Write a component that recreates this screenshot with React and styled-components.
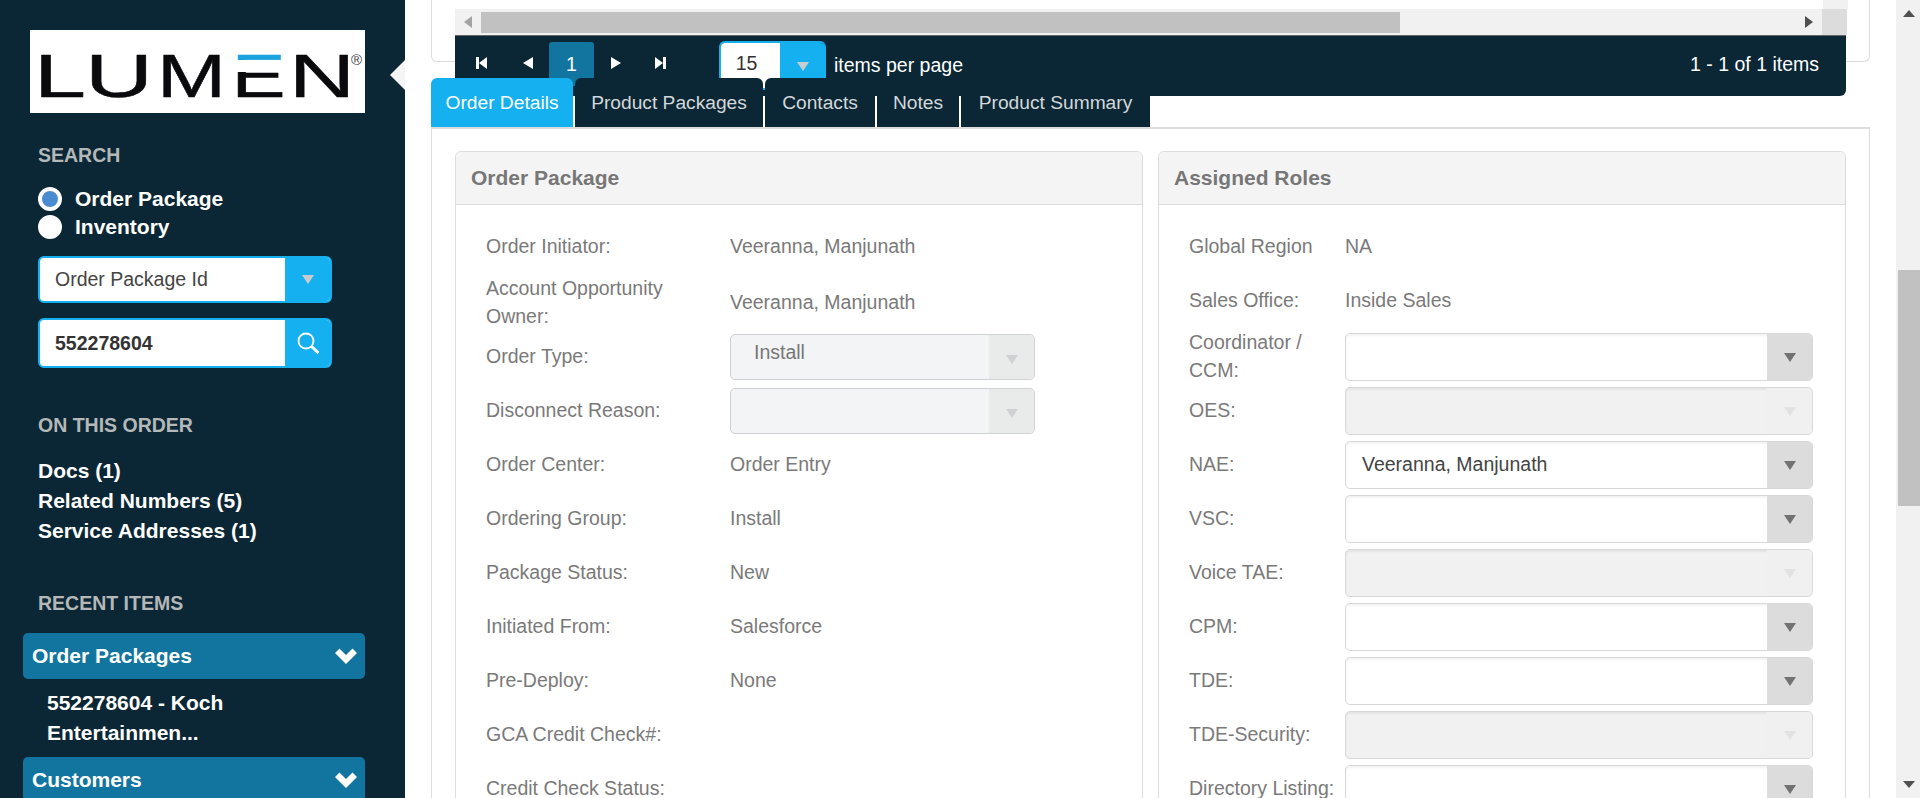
import React from 'react';
import styled, { createGlobalStyle } from 'styled-components';

const navy = '#0b2735';
const sky = '#14b0ef';
const teal = '#12759f';

const GlobalStyle = createGlobalStyle`
	html, body {
		margin: 0;
		height: 100%;
		overflow: hidden;
		background: #fff;
		font-family: "Liberation Sans", Arial, sans-serif;
	}
`;

const orderRows = [
	{ label: 'Order Initiator:', value: 'Veeranna, Manjunath' },
	{ label: 'Account Opportunity Owner:', value: 'Veeranna, Manjunath', tall: true },
	{ label: 'Order Type:', select: 'Install' },
	{ label: 'Disconnect Reason:', select: '' },
	{ label: 'Order Center:', value: 'Order Entry' },
	{ label: 'Ordering Group:', value: 'Install' },
	{ label: 'Package Status:', value: 'New' },
	{ label: 'Initiated From:', value: 'Salesforce' },
	{ label: 'Pre-Deploy:', value: 'None' },
	{ label: 'GCA Credit Check#:', value: '' },
	{ label: 'Credit Check Status:', value: '' },
];

const roleRows = [
	{ label: 'Global Region', value: 'NA' },
	{ label: 'Sales Office:', value: 'Inside Sales' },
	{ label: 'Coordinator / CCM:', role: '', tall: true },
	{ label: 'OES:', role: '', off: true },
	{ label: 'NAE:', role: 'Veeranna, Manjunath' },
	{ label: 'VSC:', role: '' },
	{ label: 'Voice TAE:', role: '', off: true },
	{ label: 'CPM:', role: '' },
	{ label: 'TDE:', role: '' },
	{ label: 'TDE-Security:', role: '', off: true },
	{ label: 'Directory Listing:', role: '' },
];

const Logo = () => (
	<LogoBox>
		<svg width="335" height="83" viewBox="0 0 335 83">
			<defs>
				<linearGradient id="lumenE" x1="0" y1="23" x2="0" y2="67" gradientUnits="userSpaceOnUse">
					<stop offset="0.16" stopColor="#1aa3de" />
					<stop offset="0.16" stopColor="#fff" />
					<stop offset="0.44" stopColor="#fff" />
					<stop offset="0.44" stopColor="#0a0a0c" />
				</linearGradient>
			</defs>
			<g fontFamily="Liberation Sans" fontSize="61" fill="#0a0a0c" stroke="#0a0a0c" strokeWidth="0.5" strokeLinejoin="round">
				<text x="4" y="66.5" textLength="52" lengthAdjust="spacingAndGlyphs">L</text>
				<text x="55" y="66.5" textLength="68" lengthAdjust="spacingAndGlyphs">U</text>
				<text x="127" y="66.5" textLength="69" lengthAdjust="spacingAndGlyphs">M</text>
				<text x="201.5" y="66.5" textLength="54" lengthAdjust="spacingAndGlyphs" fill="url(#lumenE)" stroke="url(#lumenE)">E</text>
				<text x="259" y="66.5" textLength="66" lengthAdjust="spacingAndGlyphs">N</text>
			</g>
			<text x="321" y="35" fontFamily="Liberation Sans" fontSize="15" fill="#444">®</text>
		</svg>
	</LogoBox>
);

const Caret = ({ color }) => (
	<svg width="12" height="9" viewBox="0 0 12 9">
		<path d="M0 0h12L6 9z" fill={color} />
	</svg>
);

const Chevron = () => (
	<svg width="22" height="16" viewBox="0 0 22 16">
		<path d="M0 5L4.5.5 11 7 17.5.5 22 5 11 16z" fill="#fff" />
	</svg>
);

const PagerIcon = ({ d }) => (
	<svg width="14" height="16" viewBox="0 0 14 16">
		<path d={d} fill="#fff" />
	</svg>
);

const App = () => (
	<Page>
		<GlobalStyle />
		<Sidebar>
			<Logo />
			<Notch />
			<SectionTitle>SEARCH</SectionTitle>
			<RadioGroup>
				<RadioRow>
					<Radio checked />
					Order Package
				</RadioRow>
				<RadioRow>
					<Radio />
					Inventory
				</RadioRow>
			</RadioGroup>
			<SearchType>
				<span>Order Package Id</span>
				<SideAddon>
					<Caret color="#c9ccce" />
				</SideAddon>
			</SearchType>
			<SearchBox>
				<strong>552278604</strong>
				<SideAddon>
					<svg width="22" height="22" viewBox="0 0 22 22" fill="none" stroke="#fff">
						<circle cx="9" cy="9" r="7.5" strokeWidth="1.8" />
						<path d="M14.5 14.5L21.5 21" strokeWidth="3" />
					</svg>
				</SideAddon>
			</SearchBox>

			<OrderTitle>ON THIS ORDER</OrderTitle>
			<SideLink>Docs (1)</SideLink>
			<SideLink>Related Numbers (5)</SideLink>
			<SideLink>Service Addresses (1)</SideLink>

			<RecentTitle>RECENT ITEMS</RecentTitle>
			<Accordion>
				Order Packages
				<Chevron />
			</Accordion>
			<RecentItem>552278604 - Koch Entertainmen...</RecentItem>
			<Accordion>
				Customers
				<Chevron />
			</Accordion>
		</Sidebar>

		<Main>
			<GridPanel>
				<GridEdge />
				<GridScroll>
					<ScrollArrow>
						<svg width="8" height="12"><path d="M8 0v12L0 6z" fill="#a3a3a3" /></svg>
					</ScrollArrow>
					<GridThumb />
					<ScrollArrow>
						<svg width="8" height="12"><path d="M0 0v12l8-6z" fill="#505050" /></svg>
					</ScrollArrow>
					<GridCorner />
				</GridScroll>
				<Pager>
					<PagerSlot width={52}>
						<PagerIcon d="M2 2h3v12H2zM13 2v12L5 8z" />
					</PagerSlot>
					<PagerSlot width={42}>
						<PagerIcon d="M12 2v12L2 8z" />
					</PagerSlot>
					<PageNumber>1</PageNumber>
					<PagerSlot width={44}>
						<PagerIcon d="M2 2v12l10-6z" />
					</PagerSlot>
					<PagerSlot width={46}>
						<PagerIcon d="M1 2l8 6-8 6zM9 2h3v12H9z" />
					</PagerSlot>
					<PageSize>
						<PageSizeValue>15</PageSizeValue>
						<PageSizeArrow>
							<Caret color="#c9ccce" />
						</PageSizeArrow>
					</PageSize>
					<PerPage>items per page</PerPage>
					<PageInfo>1 - 1 of 1 items</PageInfo>
				</Pager>
			</GridPanel>

			<Tabs>
				<Tab active width={142}>Order Details</Tab>
				<Tab width={188}>Product Packages</Tab>
				<Tab width={110}>Contacts</Tab>
				<Tab width={82}>Notes</Tab>
				<Tab width={189}>Product Summary</Tab>
			</Tabs>

			<TabPanel>
				<Card>
					<CardHeader>Order Package</CardHeader>
					<CardBody>
						{orderRows.map(row => (
							<OrderRow key={row.label} tall={row.tall}>
								<FieldLabel>{row.label}</FieldLabel>
								{row.select !== undefined ? (
									<LockedSelect>
										<LockedText>{row.select}</LockedText>
										<LockedArrow>
											<Caret color="#cfd1d2" />
										</LockedArrow>
									</LockedSelect>
								) : (
									<FieldValue>{row.value}</FieldValue>
								)}
							</OrderRow>
						))}
					</CardBody>
				</Card>
				<Card>
					<CardHeader>Assigned Roles</CardHeader>
					<CardBody>
						{roleRows.map(row => (
							<RoleRow key={row.label} tall={row.tall}>
								<FieldLabel>{row.label}</FieldLabel>
								{row.role !== undefined ? (
									<RoleSelect off={row.off}>
										<RoleText>{row.role}</RoleText>
										<RoleArrow off={row.off}>
											<Caret color={row.off ? '#e2e2e2' : '#727272'} />
										</RoleArrow>
									</RoleSelect>
								) : (
									<FieldValue>{row.value}</FieldValue>
								)}
							</RoleRow>
						))}
					</CardBody>
				</Card>
			</TabPanel>
		</Main>

		<PageScroll>
			<svg width="12" height="7"><path d="M0 7L6 0l6 7z" fill="#505050" /></svg>
			<PageThumb />
			<svg width="12" height="7"><path d="M0 0l6 7 6-7z" fill="#505050" /></svg>
		</PageScroll>
	</Page>
);

const Page = styled.div`
	display: flex;
	width: 1920px;
	height: 798px;
	overflow: hidden;
`;

const Sidebar = styled.aside`
	position: relative;
	flex: 0 0 405px;
	box-sizing: border-box;
	padding: 30px 40px 0 23px;
	background: ${navy};
	color: #fff;
`;

const LogoBox = styled.div`
	width: 335px;
	height: 83px;
	margin-left: 7px;
	background: #fff;
	svg {
		display: block;
	}
`;

const Notch = styled.div`
	position: absolute;
	top: 60px;
	right: 0;
	border-top: 15px solid transparent;
	border-bottom: 15px solid transparent;
	border-right: 15px solid #f5f5f5;
`;

const SectionTitle = styled.h3`
	margin: 30px 0 0 15px;
	font-size: 19.5px;
	line-height: 24px;
	font-weight: bold;
	color: #b4b8b9;
`;

const OrderTitle = styled(SectionTitle)`
	margin-top: 45px;
	margin-bottom: 19px;
`;

const RecentTitle = styled(SectionTitle)`
	margin-top: 45px;
	margin-bottom: 18px;
`;

const RadioGroup = styled.div`
	margin: 18px 0 0 15px;
`;

const RadioRow = styled.label`
	display: flex;
	align-items: center;
	gap: 13px;
	height: 28px;
	font-size: 21px;
	font-weight: bold;
`;

const Radio = styled.span`
	box-sizing: border-box;
	width: 24px;
	height: 24px;
	border-radius: 50%;
	border: 4px solid #fff;
	background: ${props => (props.checked ? '#4a8ccf' : '#fff')};
`;

const SearchType = styled.div`
	display: flex;
	box-sizing: border-box;
	width: 294px;
	height: 47px;
	margin: 15px 0 0 15px;
	border: 2px solid ${sky};
	border-radius: 6px;
	background: #fff;
	font-size: 19.5px;
	color: #444;
	overflow: hidden;
	> span,
	> strong {
		flex: 1;
		padding-left: 15px;
		line-height: 42px;
	}
`;

const SearchBox = styled(SearchType)`
	height: 50px;
	margin-top: 15px;
	color: #333;
	> strong {
		line-height: 46px;
	}
`;

const SideAddon = styled.div`
	display: flex;
	align-items: center;
	justify-content: center;
	flex: 0 0 45px;
	background: ${sky};
`;

const SideLink = styled.div`
	margin-left: 15px;
	font-size: 21px;
	line-height: 30px;
	font-weight: bold;
`;

const Accordion = styled.div`
	display: flex;
	align-items: center;
	justify-content: space-between;
	height: 46px;
	padding: 0 8px 0 9px;
	border-radius: 5px;
	background: ${teal};
	font-size: 21px;
	font-weight: bold;
`;

const RecentItem = styled.div`
	width: 250px;
	padding: 9px 0 9px 24px;
	font-size: 21px;
	line-height: 30px;
	font-weight: bold;
`;

const Main = styled.main`
	flex: 0 0 1490px;
	box-sizing: border-box;
	padding: 0 26px 0 26px;
	background: #fff;
`;

const GridPanel = styled.section`
	box-sizing: border-box;
	height: 62px;
	padding: 9px 22px 0 23px;
	border: 1px solid #dcdcdc;
	border-top: 0;
	border-radius: 0 0 6px 6px;
	position: relative;
`;

const GridEdge = styled.div`
	position: absolute;
	top: 0;
	right: 21px;
	width: 25px;
	height: 9px;
	background: #f1f1f1;
`;

const GridScroll = styled.div`
	display: flex;
	align-items: center;
	height: 26px;
	width: 1392px;
	background: #f1f1f1;
`;

const ScrollArrow = styled.div`
	display: flex;
	justify-content: center;
	flex: 0 0 26px;
`;

const GridThumb = styled.div`
	flex: 0 0 919px;
	height: 21px;
	background: #c1c1c1;
	margin-right: auto;
`;

const GridCorner = styled.div`
	flex: 0 0 25px;
	align-self: stretch;
	background: #dcdcdc;
`;

const Pager = styled.div`
	display: flex;
	align-items: flex-start;
	box-sizing: border-box;
	width: 1391px;
	height: 61px;
	border-top: 1px solid #666;
	border-radius: 0 0 6px 6px;
	background: ${navy};
	color: #fff;
	overflow: hidden;
`;

const PagerSlot = styled.div`
	display: flex;
	align-items: center;
	justify-content: center;
	flex: 0 0 ${props => props.width}px;
	height: 54px;
`;

const PageNumber = styled.div`
	flex: 0 0 45px;
	height: 44px;
	margin-top: 6px;
	padding-top: 11px;
	box-sizing: border-box;
	border-radius: 3px 3px 0 0;
	background: ${teal};
	font-size: 19.5px;
	text-align: center;
`;

const PageSize = styled.div`
	display: flex;
	width: 107px;
	height: 49px;
	margin: 5px 0 0 35px;
	box-sizing: border-box;
	border: 2px solid ${sky};
	border-right: 0;
	border-radius: 6px;
	overflow: hidden;
`;

const PageSizeValue = styled.div`
	flex: 0 0 59px;
	box-sizing: border-box;
	padding: 9px 8px 0 0;
	background: #fff;
	color: #333;
	font-size: 19.5px;
	text-align: center;
`;

const PageSizeArrow = styled.div`
	flex: 1;
	padding-top: 14px;
	background: ${sky};
	text-align: center;
`;

const PerPage = styled.div`
	margin: 17px 0 0 8px;
	font-size: 19.5px;
	line-height: 24px;
`;

const PageInfo = styled.div`
	margin: 16px 27px 0 auto;
	font-size: 19.5px;
	line-height: 24px;
`;

const Tabs = styled.nav`
	display: flex;
	gap: 2px;
	position: relative;
	z-index: 1;
	height: 49px;
	margin-top: 16px;
`;

const Tab = styled.div`
	box-sizing: border-box;
	width: ${props => props.width}px;
	padding-top: 13px;
	border-radius: 6px 6px 0 0;
	background: ${props => (props.active ? sky : navy)};
	color: ${props => (props.active ? '#fff' : '#d3d8da')};
	font-size: 19.2px;
	line-height: 24px;
	text-align: center;
`;

const TabPanel = styled.section`
	display: flex;
	gap: 15px;
	box-sizing: border-box;
	height: 700px;
	padding: 22px 23px 0;
	border: 1px solid #dcdcdc;
	border-top-width: 2px;
`;

const Card = styled.article`
	flex: 0 0 688px;
	box-sizing: border-box;
	border: 1px solid #dcdcdc;
	border-radius: 6px;
`;

const CardHeader = styled.header`
	box-sizing: border-box;
	height: 53px;
	padding: 0 15px;
	border-bottom: 1px solid #dcdcdc;
	border-radius: 6px 6px 0 0;
	background: #f4f4f4;
	color: #777;
	font-size: 21px;
	line-height: 52px;
	font-weight: bold;
`;

const CardBody = styled.div`
	padding: 15px 24px 0 30px;
`;

const OrderRow = styled.div`
	display: grid;
	grid-template-columns: 244px 305px;
	align-items: center;
	height: ${props => (props.tall ? '56px' : '54px')};
`;

const RoleRow = styled.div`
	display: grid;
	grid-template-columns: 156px 468px;
	align-items: center;
	height: ${props => (props.tall ? '56px' : '54px')};
`;

const FieldLabel = styled.div`
	padding-bottom: 2px;
	color: #7a7a7a;
	font-size: 19.5px;
	line-height: 28px;
`;

const FieldValue = styled(FieldLabel)``;

const LockedSelect = styled.div`
	display: flex;
	box-sizing: border-box;
	height: 46px;
	border: 1px solid #cfd1d2;
	border-radius: 5px;
	background: #f3f4f5;
	overflow: hidden;
`;

const LockedText = styled.div`
	flex: 1;
	padding-left: 23px;
	color: #777;
	font-size: 19.5px;
	line-height: 34px;
`;

const LockedArrow = styled.div`
	display: flex;
	align-items: center;
	justify-content: center;
	flex: 0 0 45px;
	padding-top: 4px;
	background: #e9eaea;
`;

const RoleSelect = styled.div`
	display: flex;
	box-sizing: border-box;
	height: 48px;
	border: 1px solid #d8d8d8;
	border-radius: 5px;
	background: ${props => (props.off ? '#f1f1f1' : '#fff')};
	box-shadow: inset 0 2px 2px rgba(0, 0, 0, 0.05);
	overflow: hidden;
`;

const RoleText = styled.div`
	flex: 1;
	padding-left: 16px;
	color: #444;
	font-size: 19.5px;
	line-height: 44px;
`;

const RoleArrow = styled.div`
	display: flex;
	align-items: center;
	justify-content: center;
	flex: 0 0 45px;
	background: ${props => (props.off ? '#f0f0f0' : '#dcdcdc')};
`;

const PageScroll = styled.div`
	display: flex;
	flex-direction: column;
	align-items: center;
	flex: 0 0 25px;
	box-sizing: border-box;
	padding-top: 10px;
	height: 798px;
	background: #f1f1f1;
	> svg:last-child {
		margin-top: 275px;
	}
`;

const PageThumb = styled.div`
	width: 22px;
	height: 236px;
	margin-top: 253px;
	background: #c1c1c1;
`;

export default App;
